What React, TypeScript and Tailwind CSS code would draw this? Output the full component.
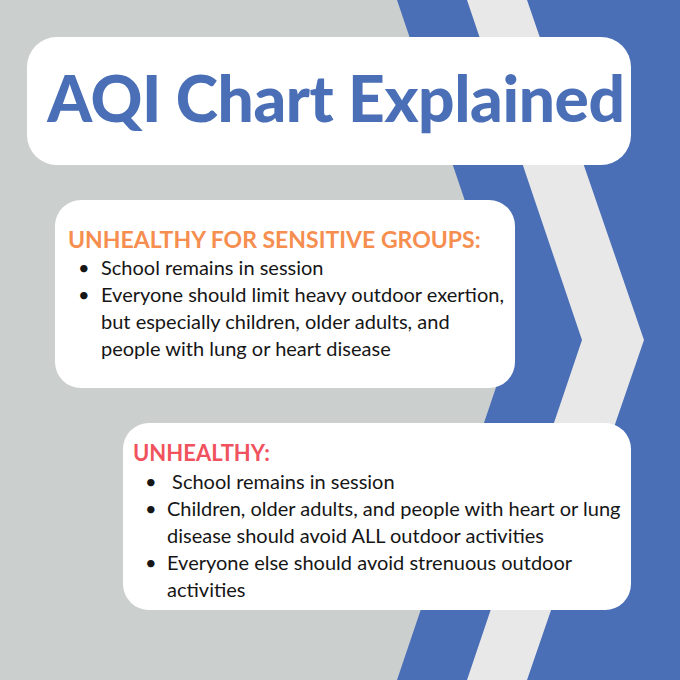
import React from "react";

const sensitive = [
  "School remains in session",
  "Everyone should limit heavy outdoor exertion, but especially children, older adults, and people with lung or heart disease",
];

const unhealthy = [
  "\u00a0School remains in session",
  "Children, older adults, and people with heart or lung disease should avoid ALL outdoor activities",
  "Everyone else should avoid strenuous outdoor activities",
];

const Backdrop: React.FC = () => (
  <svg
    className="absolute inset-0"
    width="680"
    height="680"
    viewBox="0 0 680 680"
    aria-hidden="true"
  >
    <polygon points="397,0 680,0 680,680 397,680 512,340" fill="#4a6fb7" />
    <polygon points="467,0 527,0 644,340 527,680 467,680 582,340" fill="#e8e8e8" />
  </svg>
);

const Bullets: React.FC<{ items: string[]; gap: string }> = ({ items, gap }) => (
  <ul className="flex flex-col">
    {items.map((item) => (
      <li key={item} className="flex">
        <span className={`${gap} shrink-0`}>•</span>
        <span>{item}</span>
      </li>
    ))}
  </ul>
);

export default function App() {
  return (
    <div className="relative w-[680px] h-[680px] overflow-hidden bg-[#cbcfce] font-['Lato',sans-serif] text-[#161616]">
      <Backdrop />

      <div className="relative flex flex-col">
        {/* Title */}
        <div className="ml-[27px] mt-[37px] w-[604px] h-[128px] rounded-[30px] bg-white flex items-center justify-center">
          <h1 className="ml-[14px] text-[64px] font-black leading-none text-[#4a6fb6] tracking-[-0.4px] pb-[6px]">
            AQI Chart Explained
          </h1>
        </div>

        {/* Unhealthy for sensitive groups */}
        <div className="ml-[55px] mt-[35px] w-[460px] h-[188px] rounded-[26px] bg-white pl-[13px] pt-[24px] pr-[2px]">
          <h2 className="text-[23px] font-bold leading-[30px] text-[#f58e4f]">
            UNHEALTHY FOR SENSITIVE GROUPS:
          </h2>
          <div className="pl-[10px] text-[20px] leading-[27px]">
            <Bullets items={sensitive} gap="w-[23px]" />
          </div>
        </div>

        {/* Unhealthy */}
        <div className="ml-[123px] mt-[35px] w-[508px] h-[187px] rounded-[26px] bg-white pl-[10px] pt-[15px] pr-[4px]">
          <h2 className="text-[22px] font-bold leading-[30px] text-[#f0525e]">
            UNHEALTHY:
          </h2>
          <div className="pl-[12px] text-[20px] leading-[27px]">
            <Bullets items={unhealthy} gap="w-[22px]" />
          </div>
        </div>
      </div>
    </div>
  );
}
